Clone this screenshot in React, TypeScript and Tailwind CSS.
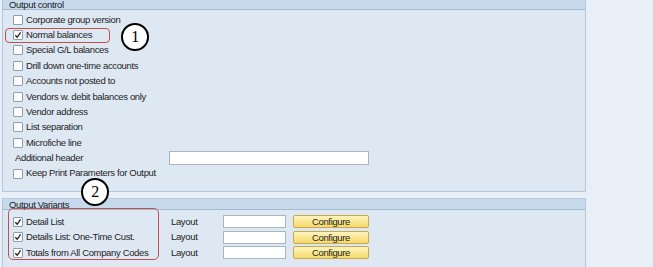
import React from "react";

const font = { fontFamily: '"Liberation Sans", Arial, sans-serif' };

function Check({ on }: { on?: boolean }) {
  return (
    <span className="mr-[3px] flex h-[10px] w-[10px] shrink-0 items-center justify-center rounded-[1px] border border-[#8d9db3] bg-white">
      {on && (
        <svg width="8" height="8" viewBox="0 0 8 8">
          <path d="M1.3 4.2 L3.2 6.3 L6.6 1.4" fill="none" stroke="#1f1f1f" strokeWidth="1.3" />
        </svg>
      )}
    </span>
  );
}

function Row({ label, on }: { label: string; on?: boolean }) {
  return (
    <div className="flex h-[15.4px] items-center pl-[10px]">
      <Check on={on} />
      <span>{label}</span>
    </div>
  );
}

function Marker({ n, className }: { n: string; className: string }) {
  return (
    <div
      className={`absolute z-10 flex h-[28px] w-[28px] items-center justify-center rounded-full border-2 border-black bg-white text-[16px] text-black ${className}`}
      style={{ fontFamily: '"Liberation Serif", "Times New Roman", serif' }}
    >
      {n}
    </div>
  );
}

const outputRows = [
  { label: "Corporate group version" },
  { label: "Normal balances", on: true },
  { label: "Special G/L balances" },
  { label: "Drill down one-time accounts" },
  { label: "Accounts not posted to" },
  { label: "Vendors w. debit balances only" },
  { label: "Vendor address" },
  { label: "List separation" },
  { label: "Microfiche line" },
];

const variants = ["Detail List", "Details List: One-Time Cust.", "Totals from All Company Codes"];

export default function App() {
  return (
    <div
      className="relative h-[267px] w-[653px] overflow-hidden bg-[#e9eff7] pl-[2px] text-[9.5px] tracking-[-0.35px] text-[#1e1e1e]"
      style={font}
    >
      {/* Output control */}
      <section className="h-[192px] w-[584px] border-x border-b border-[#b4c7dc] bg-[#dee8f3]">
        <div className="h-[10px] border-b border-[#a6bad0] bg-[#c7d9ec] pl-[6px] leading-[9px] text-[#222]">
          Output control
        </div>
        <div className="pt-[2px]">
          {outputRows.map((r) => (
            <Row key={r.label} label={r.label} on={r.on} />
          ))}
          <div className="flex h-[15.4px] items-center pl-[12px]">
            <span className="w-[154px]">Additional header</span>
            <span className="h-[14px] w-[200px] border border-[#a9b5c3] bg-white" />
          </div>
          <Row label="Keep Print Parameters for Output" />
        </div>
      </section>

      {/* Output Variants */}
      <section className="mt-[6px] h-[80px] w-[584px] border-x border-t border-[#b4c7dc] bg-[#dee8f3]">
        <div className="h-[11px] border-b border-[#a6bad0] bg-[#c7d9ec] pl-[6px] leading-[11px] text-[#222]">
          Output Variants
        </div>
        <div className="pt-[4px]">
          {variants.map((v) => (
            <div key={v} className="flex h-[15.5px] items-center pl-[10px]">
              <Check on />
              <span className="w-[145px]">{v}</span>
              <span className="w-[52px]">Layout</span>
              <span className="h-[13px] w-[63px] border border-[#a9b5c3] bg-white" />
              <button className="ml-[7px] h-[13px] w-[76px] rounded-[2px] border border-[#c9a94c] bg-gradient-to-b from-[#fef5bd] to-[#f6d965] leading-[11px] text-[#1e1e1e]">
                Configure
              </button>
            </div>
          ))}
        </div>
      </section>

      {/* annotations */}
      <div className="pointer-events-none absolute left-[5px] top-[28px] h-[15px] w-[105px] rounded-[4px] border-[1.5px] border-[#c0504d]" />
      <div className="pointer-events-none absolute left-[8px] top-[208px] h-[52px] w-[151px] rounded-[5px] border-[1.5px] border-[#c0504d]" />
      <Marker n="1" className="left-[121px] top-[23px]" />
      <Marker n="2" className="left-[81px] top-[178px]" />
    </div>
  );
}
